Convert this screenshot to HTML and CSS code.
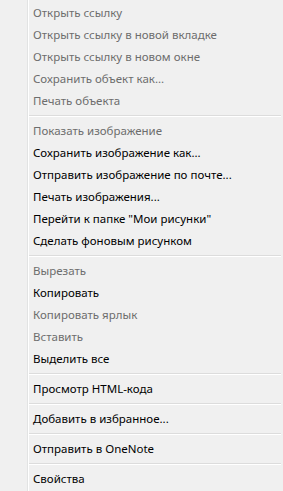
FILE: index.html
```html
<!DOCTYPE html>
<html lang="ru">
<head>
<meta charset="utf-8">
<link rel="stylesheet" href="styles.css">
</head>
<body>
<div class="menu">
  <div class="gutter"></div>
  <ul class="items">
    <li class="item off">Открыть ссылку</li>
    <li class="item off">Открыть ссылку в новой вкладке</li>
    <li class="item off">Открыть ссылку в новом окне</li>
    <li class="item off">Сохранить объект как...</li>
    <li class="item off">Печать объекта</li>
    <li class="sep"></li>
    <li class="item off">Показать изображение</li>
    <li class="item">Сохранить изображение как...</li>
    <li class="item">Отправить изображение по почте...</li>
    <li class="item">Печать изображения...</li>
    <li class="item">Перейти к папке "Мои рисунки"</li>
    <li class="item">Сделать фоновым рисунком</li>
    <li class="sep"></li>
    <li class="item off">Вырезать</li>
    <li class="item">Копировать</li>
    <li class="item off">Копировать ярлык</li>
    <li class="item off">Вставить</li>
    <li class="item">Выделить все</li>
    <li class="sep"></li>
    <li class="item">Просмотр HTML-кода</li>
    <li class="sep"></li>
    <li class="item">Добавить в избранное...</li>
    <li class="sep"></li>
    <li class="item">Отправить в OneNote</li>
    <li class="sep"></li>
    <li class="item">Свойства</li>
  </ul>
</div>
</body>
</html>
```

FILE: styles.css
```css
html, body {
  margin: 0;
  padding: 0;
  background: #f0f0f0;
}
.menu {
  display: flex;
  width: 283px;
  height: 491px;
  overflow: hidden;
  font-family: "Noto Sans", "Open Sans", sans-serif;
  font-size: 11.5px;
}
.gutter {
  width: 27px;
  flex: none;
  border-right: 1px solid #e2e3e3;
  box-shadow: 1px 0 0 #ffffff;
}
.items {
  list-style: none;
  margin: 0;
  padding: 2px 2px 0 1px;
  flex: 1;
}
.item {
  height: 22px;
  line-height: 22px;
  padding-left: 4px;
  color: #000000;
  white-space: nowrap;
}
.item.off {
  color: #6d6d6d;
}
.sep {
  height: 8px;
  box-sizing: border-box;
  padding-top: 3px;
}
.sep::before {
  content: "";
  display: block;
  height: 1px;
  background: #dcdcdc;
  border-bottom: 1px solid #ffffff;
}
```
